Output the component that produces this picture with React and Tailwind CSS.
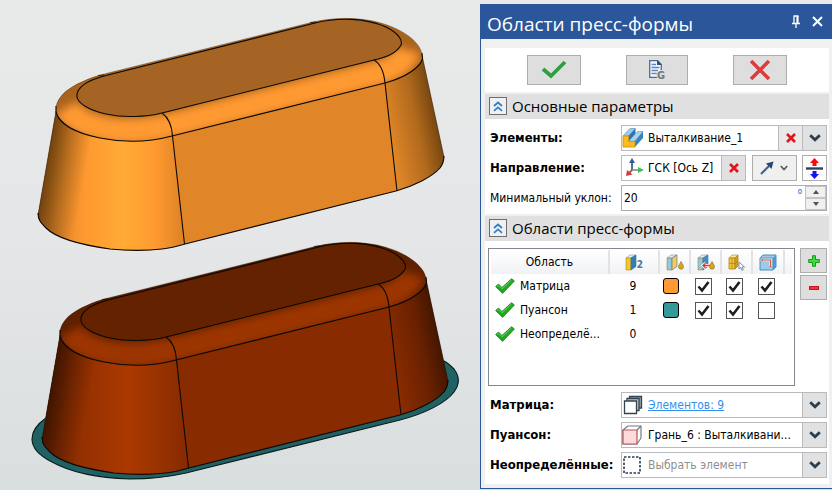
import React, { useState } from "react";

const UI_FONT = "font-['DejaVu_Sans_Condensed','DejaVu_Sans','Noto_Sans',sans-serif]";
const TITLE_FONT = "font-['Open_Sans','Noto_Sans',sans-serif]";

/* ---------- 3D scene ---------- */

const BODY = "M56 111 L38 215 C38 220 41 223 46 228 C56 238 82 245 110 249 C130 251 145 251 162 249 C170 248 178 246 185 244 L396 191 C414 186 432 177 440 168 C443 164 444 160 444 157 L422 55 Z";
const CAP = "M56 112 C55 104 59 97 66 91 C75 84 88 78 104 74 L313 22 C335 17 360 17 381 23 C398 28 411 36 417 44 C421 49 422 53 422.500 57 C421 66 407 77 385 83 L172 136 C150 142 125 143 100 138 C76 133 59 124 56 112 Z";
const TOP = "M77 97 C76 88 86 81 104 76 L315 23 C338 17 366 18 386 27 C398 33 403 40 401 45 C397 53 388 57 374 60 L162 113 C146 117 124 118 106 114 C88 110 78 103 77 97 Z";

const orange = { id: "upper", top: "#a56424", side: "#e08628", mid: "#ff9930", bright: "#ffab35", dark: "#553208", cap: "#a9631d", capGlow: "#ff9a30" };
const red = { id: "lower", top: "#642200", side: "#882b00", mid: "#983200", bright: "#ab3900", dark: "#2d0f00", cap: "#5e2000", capGlow: "#9c3400" };

function MoldHalf({ c, transform }) {
  return (
    <g transform={transform}>
      <defs>
        <linearGradient id={`${c.id}-left`} gradientUnits="userSpaceOnUse" x1="46" y1="0" x2="180" y2="0">
          <stop offset="0" stopColor={c.side} />
          <stop offset="0.3" stopColor={c.mid} />
          <stop offset="0.58" stopColor={c.bright} />
          <stop offset="0.82" stopColor={c.mid} />
          <stop offset="1" stopColor={c.side} />
        </linearGradient>
        <linearGradient id={`${c.id}-edge-l`} gradientUnits="userSpaceOnUse" x1="47" y1="164" x2="86" y2="171">
          <stop offset="0" stopColor={c.dark} stopOpacity="0.8" />
          <stop offset="0.5" stopColor={c.dark} stopOpacity="0.34" />
          <stop offset="1" stopColor={c.dark} stopOpacity="0" />
        </linearGradient>
        <linearGradient id={`${c.id}-edge-r`} gradientUnits="userSpaceOnUse" x1="434" y1="110" x2="386" y2="120">
          <stop offset="0" stopColor={c.dark} stopOpacity="0.75" />
          <stop offset="0.4" stopColor={c.dark} stopOpacity="0.34" />
          <stop offset="1" stopColor={c.dark} stopOpacity="0" />
        </linearGradient>
        <clipPath id={`${c.id}-cap`}><path d={CAP} /></clipPath>
        <filter id={`${c.id}-soft`} filterUnits="userSpaceOnUse" x="20" y="0" width="440" height="180">
          <feGaussianBlur stdDeviation="4" />
        </filter>
      </defs>
      <path d={BODY} fill={c.side} />
      <path d="M56 111 L38 215 C38 220 41 223 46 228 C56 238 82 245 110 249 C130 251 145 251 162 249 C170 248 178 246 185 244 L172 130 Z" fill={`url(#${c.id}-left)`} />
      <path d="M56 111 L38 215 C38 220 41 223 46 228 C56 238 82 245 110 249 L110 130 Z" fill={`url(#${c.id}-edge-l)`} />
      <path d="M385 83 L397 191 C414 186 432 177 440 168 C443 164 444 160 444 157 L422 55 Z" fill={`url(#${c.id}-edge-r)`} />
      <path d={CAP} fill={c.cap} />
      <g clipPath={`url(#${c.id}-cap)`}>
        <path d="M66 108 C76 124 103 131 128 131 C143 131 156 129 168 126 L380 73 C395 68 405 60 408 50" fill="none" stroke={c.capGlow} strokeWidth="25" filter={`url(#${c.id}-soft)`} />
      </g>
      <path d={TOP} fill={c.top} />
      <g fill="none" stroke="#0b0805" strokeWidth="1.1" strokeLinejoin="round">
        <path d={TOP} />
        <path d="M56 106 L56 112 C59 124 76 133 100 138 C125 143 150 142 172 136 L385 83 C407 77 420 67 422.500 59 L422 53" />
        <path d="M38 213 C38 220 41 223 46 228 C56 238 82 245 110 249 C130 251 145 251 162 249 C170 248 178 246 185 244 L396 191 C414 186 432 177 440 168 C443 164 444 160 444 156" />
        <path d="M162 113 C169 118 172 127 172.500 136 L184.500 244" />
        <path d="M374 60 C381 64 384 73 385 83 L397 191" />
        <path d="M56 111 L38 215 M422 55 L444 157" strokeOpacity="0.5" strokeWidth="0.8" />
        <path d="M56 107 C58 97 66 89 82 82 C88 79 96 76 104 74 L313 22 C335 17 360 17 381 23 C405 30 421 43 422 55" strokeOpacity="0.35" strokeWidth="0.7" />
        <path d="M98 75.500 L104 75 M310 22.500 L316 22" strokeOpacity="0.7" />
      </g>
    </g>
  );
}

function Scene() {
  return (
    <svg viewBox="0 0 480 490" className="block w-full" role="img" aria-label="3D">
      <path d="M46 418 C36 425 32 432 32 439 C32 448 40 456 52 462 C70 472 98 478 130 479 C150 479 168 477 186 473 L400 420 C424 414 446 403 454 392 C460 384 460 377 454 369 C451 366 448 363 444 361 L420 400 L200 440 L60 440 Z" fill="#206264" stroke="#0b1a1a" strokeWidth="1.1" />
      <MoldHalf c={red} transform="translate(4 224)" />
      <MoldHalf c={orange} />
    </svg>
  );
}

/* ---------- icons ---------- */

const Chevron = ({ small }) => small ? (
  <svg width="8" height="6" viewBox="0 0 8 6" fill="none" stroke="#555" strokeWidth="1.6"><path d="M.8 1 L4 4.500 L7.200 1" /></svg>
) : (
  <svg width="12" height="8" viewBox="0 0 12 8" fill="none" stroke="#2b3e4f" strokeWidth="2.800"><path d="M1.200 1.200 L6 5.800 L10.800 1.200" /></svg>
);

const RedCross = () => (
  <svg width="10" height="10" viewBox="0 0 10 10" stroke="#e3141c" strokeWidth="2.600"><path d="M1 1 L9 9 M9 1 L1 9" /></svg>
);

const ExtrudeIcon = () => (
  <svg width="22" height="22" viewBox="0 0 22 22" strokeLinejoin="round">
    <path d="M1 9 L8 1.500 H13.500 L6.500 9 Z" fill="#9dcbea" stroke="#4b86b3" strokeWidth=".6" />
    <path d="M6.500 9 L13.500 1.500 V7 L6.500 14.500 Z" fill="#2d74ae" />
    <path d="M6.500 14.500 L15.500 4.500 H21 L13 14 Z" fill="#a9d4ef" stroke="#4b86b3" strokeWidth=".5" />
    <path d="M13 14 L21 4.500 V11 L13 20 Z" fill="#3a82bc" />
    <path d="M1 9 H6.500 V14.500 H13 V20 H1 Z" fill="#fdbb22" stroke="#d39410" strokeWidth=".9" />
  </svg>
);

const AxesIcon = () => (
  <svg width="20" height="20" viewBox="0 0 20 20" fill="none">
    <path d="M7 4 V12" stroke="#3b5f95" strokeWidth="1.800" />
    <path d="M7 12 H14" stroke="#6d8a85" strokeWidth="1.500" />
    <path d="M7 12 L4 15" stroke="#a55" strokeWidth="1.800" />
    <path d="M7 0 L10 5 H4 Z" fill="#3358a0" />
    <path d="M19 12 L13 9 V15 Z" fill="#3fbf57" />
    <path d="M1 18 L2 12 L7.500 16.500 Z" fill="#d33a3a" />
  </svg>
);

const TableCheck = () => (
  <svg width="20" height="16" viewBox="0 0 20 16"><path d="M.6 8.500 L3.500 6 L7 9.500 L16.500 .7 L19.400 3 L7.600 15.400 Z" fill="#22a81f" stroke="#158016" strokeWidth=".8" strokeLinejoin="round" /><path d="M2 8.300 L3.500 7.200 L7 10.800 L16.500 2" fill="none" stroke="#62d457" strokeWidth="1" /></svg>
);

const Book = ({ front = "#f6c630", side = "#2f7fb8" }) => (
  <g strokeLinejoin="round" strokeWidth=".6">
    <path d="M1 4 L5 1 H11 L6 4 Z" fill="#e4eef3" stroke="#7796a5" />
    <path d="M1 4 H6 V16 H1 Z" fill={front} stroke="#a98725" />
    <path d="M6 4 L11 1 V12.500 L6 16 Z" fill={side} stroke="#35729c" />
  </g>
);
const Drop = () => <path d="M15 7.500 C16 9.800 17.500 11 17.500 12.700 A2.500 2.500 0 0 1 12.500 12.700 C12.500 11 14 9.800 15 7.500 Z" fill="#d9a514" stroke="#8e7b36" strokeWidth=".7" />;

const CountIcon = () => (
  <span className="flex items-end justify-center">
    <svg width="12" height="17" viewBox="0 0 12 17"><Book /></svg>
    <span className="text-[10px] font-bold leading-3 text-[#4f74a0]">2</span>
  </span>
);
const ColorIcon = () => <svg width="18" height="17" viewBox="0 0 18 17"><Book front="#8fc8e6" side="#f5c860" /><Drop /></svg>;
const ColorArrowIcon = () => <svg width="18" height="17" viewBox="0 0 18 17"><Book front="#8fc8e6" side="#3f8fc6" /><path d="M13 11.500 H6 M8.500 9 L6 11.500 L8.500 14" fill="none" stroke="#fff" strokeWidth="3" /><path d="M13 11.500 H6 M8.500 9.300 L6 11.500 L8.500 13.700" fill="none" stroke="#e23b32" strokeWidth="1.400" /><Drop /></svg>;
const PickFacesIcon = () => (
  <svg width="18" height="17" viewBox="0 0 18 17">
    <path d="M1 4 L4 1 H10 L7 4 Z" fill="#ffe795" stroke="#a98725" strokeWidth=".6" />
    <path d="M1 4 H7 V15 H1 Z" fill="#f8c52f" stroke="#a98725" strokeWidth=".8" />
    <path d="M7 4 L10 1 V12 L7 15 Z" fill="#d89c16" stroke="#a98725" strokeWidth=".8" />
    <path d="M1 9.500 H7 L10 6.500 M4 4 V15" stroke="#a07f22" strokeWidth=".7" fill="none" />
    <path d="M11 8 V15 L12.800 13.400 L14 16.400 L15.200 15.800 L14 13 H16.500 Z" fill="#fff" stroke="#6f83a6" strokeWidth=".9" />
  </svg>
);
const BoxPathIcon = () => (
  <svg width="18" height="17" viewBox="0 0 18 17">
    <path d="M1 4 L4 1 H17 V13 L14 16 H1 Z" fill="#9ccbe8" stroke="#3a86b8" strokeWidth=".9" />
    <path d="M14 16 V4 L17 1 V13 Z" fill="#4d9bcd" /><path d="M1 4 H14 V16" fill="none" stroke="#4c8fb8" strokeWidth=".7" />
    <path d="M3 6 H11.500 V13 M3 4.500 V7.500 M10 13 H13" fill="none" stroke="#e7f2f8" strokeWidth="2.600" />
    <path d="M3 6 H11.500 V13 M3 4.500 V7.500 M10 13 H13" fill="none" stroke="#dc5149" strokeWidth="1.200" />
  </svg>
);

const StackIcon = () => (
  <svg width="20" height="20" viewBox="0 0 20 20" stroke="#344150" strokeWidth="1.300">
    <path d="M6.500 1.500 H18.500 V13 H6.500 Z" fill="#9aa3aa" /><path d="M4 3.500 H16 V15.500 H4 Z" fill="#c6cbd0" /><path d="M1.500 6 H13.500 V18.500 H1.500 Z" fill="#fff" />
  </svg>
);
const FaceIcon = () => (
  <svg width="20" height="20" viewBox="0 0 20 20" strokeLinejoin="round">
    <path d="M1 5 L6 1 H19 V13 L15 19 H1 Z" fill="#fff" stroke="#747b83" strokeWidth="1.200" />
    <path d="M15 5 L19 1" stroke="#747b83" strokeWidth="1.200" />
    <path d="M1 5 H15 V19 H1 Z" fill="#ffdada" stroke="#b95555" strokeWidth="1.200" />
  </svg>
);
const DashedIcon = () => (
  <svg width="20" height="20" viewBox="0 0 20 20"><rect x="2" y="2" width="16" height="16" fill="none" stroke="#2c3e52" strokeWidth="1.600" strokeDasharray="2.500 1.500" /></svg>
);

/* ---------- panel parts ---------- */

const grayBtn = "flex items-center justify-center border border-[#adadad] bg-[#dedede]";
const fieldBox = "flex border border-[#b8babd] bg-white";

function SectionTitle({ children }) {
  return (
    <h2 className={`flex h-[25px] items-center gap-[5px] bg-[#e0e0e0] pb-px pl-1 text-[15px] text-black ${TITLE_FONT}`}>
      <button aria-label="Свернуть" className="flex size-[18px] items-center justify-center border border-[#6d6d6d] bg-[#f0f0f0]">
        <svg width="10" height="11" viewBox="0 0 10 11" fill="none" stroke="#2a7fcb" strokeWidth="1.700"><path d="M1 5 L5 1.500 L9 5 M1 9.800 L5 6.300 L9 9.800" /></svg>
      </button>
      {children}
    </h2>
  );
}

const rowGrid = "grid grid-cols-[minmax(0,1fr)_206px] items-center";

function FieldRow({ id, label, bold = true, children }) {
  return (
    <div className={rowGrid}>
      <label htmlFor={id} className={`whitespace-nowrap ${bold ? "text-[13px] font-bold" : ""}`}>{label}</label>
      {children}
    </div>
  );
}

function Picker({ id, value, muted, icon }) {
  return (
    <div className="grid h-[26px] grid-cols-[26px_minmax(0,1fr)_24px] items-center border border-[#b8babd] bg-white">
      <span className="pointer-events-none z-10 col-start-1 row-start-1">{icon}</span>
      <span className="pointer-events-none z-10 col-start-3 row-start-1 flex h-full items-center justify-center border-l border-[#b8babd] bg-[#e1e1e1]"><Chevron /></span>
      <select id={id} className={`col-span-3 col-start-1 row-start-1 h-full w-full appearance-none bg-transparent pr-6 pl-[26px] ${muted ? "text-[#8f8f8f]" : "text-black"}`}>
        <option>{value}</option>
      </select>
    </div>
  );
}

function Tick({ label, initial }) {
  const [on, setOn] = useState(initial);
  return (
    <label className="mx-auto grid size-[17px]">
      <input type="checkbox" aria-label={label} checked={on} onChange={() => setOn(!on)} className="col-start-1 row-start-1 size-[17px] appearance-none border border-[#555] bg-white" />
      {on && <svg className="pointer-events-none col-start-1 row-start-1" width="17" height="17" viewBox="0 0 17 17" fill="none" stroke="#1d1d1d" strokeWidth="2.600"><path d="M3.500 8.500 L7 12.500 L13.500 4" /></svg>}
    </label>
  );
}

const regions = [
  { name: "Матрица", count: 9, swatch: "bg-[#ff9933]", ticks: [true, true, true] },
  { name: "Пуансон", count: 1, swatch: "bg-[#339999]", ticks: [true, true, false] },
  { name: "Неопределё...", count: 0, swatch: null, ticks: [] },
];

function RegionTable() {
  const th = "border-r-2 border-[#e3e3e3] p-0 font-normal";
  return (
    <div className="h-[138px] min-w-0 flex-1 border border-[#828790] bg-white px-[2px] pt-px">
      <table className="w-full table-fixed border-collapse">
        <colgroup><col /><col className="w-[50px]" /><col className="w-[31px]" /><col className="w-[31px]" /><col className="w-[31px]" /><col className="w-[32px]" /><col className="w-[8px]" /></colgroup>
        <thead>
          <tr className="h-6 bg-gradient-to-b from-white to-[#f1f2f4]">
            <th className={th}>Область</th>
            {[CountIcon, ColorIcon, ColorArrowIcon, PickFacesIcon, BoxPathIcon].map((Icon, i) => (
              <th key={i} className={th}><span className="flex justify-center"><Icon /></span></th>
            ))}
            <th className="p-0" />
          </tr>
        </thead>
        <tbody>
          {regions.map((r) => (
            <tr key={r.name} className="h-6">
              <td className="p-0"><span className="flex items-center gap-[5px] pl-1 whitespace-nowrap"><TableCheck />{r.name}</span></td>
              <td className="py-0 pr-[2px] pl-0 text-center">{r.count}</td>
              <td className="py-0 pr-2 pl-0">{r.swatch && <button aria-label={`Цвет: ${r.name}`} className={`mx-auto block size-4 rounded-[3px] border border-black ${r.swatch}`} />}</td>
              {r.ticks.map((t, i) => <td key={i} className="py-0 pr-1 pl-0"><Tick initial={t} label={`${r.name} ${i + 1}`} /></td>)}
            </tr>
          ))}
        </tbody>
      </table>
    </div>
  );
}

function Panel() {
  return (
    <aside className={`mt-1 flex w-[352px] shrink-0 flex-col self-start border-b border-l border-[#2b579a] bg-[#f0f0f0] text-[12px] leading-4 text-black ${UI_FONT}`}>
      <header className="flex h-[35px] items-center bg-[#2b579a] pr-[9px] pl-1.5 text-white">
        <h1 className={`flex-1 pt-1 text-[19px] whitespace-nowrap ${TITLE_FONT}`}>Области пресс-формы</h1>
        <button aria-label="Закрепить" className="mr-[11px]">
          <svg width="10" height="14" viewBox="0 0 10 14" fill="none" stroke="#fff" strokeWidth="1.300"><path d="M2.500 1 H7.500 M3 1 V8 M1 8.500 H9 M5 9 V13" /><path d="M6.500 1 V8" strokeWidth="2.200" /></svg>
        </button>
        <button aria-label="Закрыть">
          <svg width="11" height="11" viewBox="0 0 11 11" stroke="#fff" strokeWidth="2"><path d="M1 1 L10 10 M10 1 L1 10" /></svg>
        </button>
      </header>

      <div className="flex flex-col gap-[2px] pt-[9px] pr-[3px] pb-[4px] pl-1">
        <div className="flex h-11 items-center justify-between bg-white px-[42px]">
          <button aria-label="Применить" className={`${grayBtn} h-[30px] w-[54px]`}>
            <svg width="26" height="20" viewBox="0 0 26 20" fill="none" stroke="#2f9f40" strokeWidth="3.800"><path d="M2 9 L10 16 L24 2" /></svg>
          </button>
          <button aria-label="Отчёт" className={`${grayBtn} h-[30px] w-[62px]`}>
            <svg width="22" height="26" viewBox="-2 -2 22 26">
              <path d="M1.700 1.700 H9.500 L13.300 5.500 V18.300 H1.700 Z" fill="#f4f8fc" stroke="#4a6b9c" strokeWidth="1.300" />
              <path d="M9 1 L14 6 H9 Z" fill="#2b4f8a" />
              <path d="M3.500 5.500 H8 M3.500 8.500 H11.500 M3.500 11.500 H10 M3.500 14.500 H9" stroke="#5e88bd" strokeWidth="1.300" />
              <text x="9" y="20" fontSize="11" fontWeight="bold" fill="#777" stroke="#dedede" strokeWidth="2" paintOrder="stroke">G</text>
            </svg>
          </button>
          <button aria-label="Отменить" className={`${grayBtn} h-[30px] w-[54px]`}>
            <svg width="20" height="20" viewBox="0 0 20 20" stroke="#dc3c3c" strokeWidth="3.600"><path d="M1 1 L19 19 M19 1 L1 19" /></svg>
          </button>
        </div>

        <section>
          <SectionTitle>Основные параметры</SectionTitle>
          <div className="flex flex-col gap-1 bg-white pt-1.5 pr-[2px] pb-[3px] pl-[5px]">
            <FieldRow id="elements" label="Элементы:">
              <div className={`${fieldBox} h-[26px]`}>
                <span className="flex w-[26px] shrink-0 items-center"><ExtrudeIcon /></span>
                <input id="elements" readOnly value="Выталкивание_1" className="min-w-0 flex-1 bg-transparent" />
                <button aria-label="Удалить элемент" className="flex w-6 items-center justify-center border-l border-[#b8babd] bg-[#e9e9e9]"><RedCross /></button>
                <button aria-label="Список элементов" className="flex w-6 items-center justify-center border-l border-[#b8babd] bg-[#e1e1e1]"><Chevron /></button>
              </div>
            </FieldRow>
            <FieldRow id="direction" label="Направление:">
              <div className="flex h-[26px] justify-between">
                <div className={`${fieldBox} w-[125px]`}>
                  <span className="flex w-[26px] shrink-0 items-center pl-[3px]"><AxesIcon /></span>
                  <input id="direction" readOnly value="ГСК [Ось Z]" className="min-w-0 flex-1 bg-transparent" />
                  <button aria-label="Удалить направление" className="flex w-6 items-center justify-center border-l border-[#b8babd] bg-[#e1e1e1]"><RedCross /></button>
                </div>
                <button aria-label="Выбор направления" className="flex w-[45px] items-center justify-center gap-1.5 border border-[#adadad] bg-[#f0f0f0]">
                  <svg width="14" height="14" viewBox="0 0 14 14"><path d="M1 13 L9 5" stroke="#3c638f" strokeWidth="2" /><path d="M13.500 .5 L11.500 8 L6 2.500 Z" fill="#27466f" /></svg>
                  <Chevron small />
                </button>
                <button aria-label="Обратить направление" className="flex w-[25px] items-center justify-center border border-[#adadad] bg-[#fdfdfd]">
                  <svg width="17" height="21" viewBox="0 0 17 21"><path d="M8.500 0 L13 5 H10.500 V8 H6.500 V5 H4 Z" fill="#f00b12" /><path d="M0 10.500 H17" stroke="#2b4360" strokeWidth="2.400" /><path d="M8.500 21 L13 16 H10.500 V13 H6.500 V16 H4 Z" fill="#1411f5" /></svg>
                </button>
              </div>
            </FieldRow>
            <FieldRow id="draft" label="Минимальный уклон:" bold={false}>
              <div className="flex h-[26px] border border-[#abadb3] bg-white">
                <input id="draft" defaultValue="20" className="min-w-0 flex-1 bg-transparent pl-[2px]" />
                <span className="pt-px pr-[2px] text-[14px] text-[#2590e0]">°</span>
                <div className="flex w-[21px] flex-col">
                  <button aria-label="Больше" className="flex flex-1 items-center justify-center border border-[#c4c4c4] bg-[#f0f0f0]"><svg width="6" height="4" viewBox="0 0 6 4"><path d="M0 4 L3 0 L6 4 Z" fill="#505050" /></svg></button>
                  <button aria-label="Меньше" className="flex flex-1 items-center justify-center border border-[#c4c4c4] bg-[#f0f0f0]"><svg width="6" height="4" viewBox="0 0 6 4"><path d="M0 0 L3 4 L6 0 Z" fill="#505050" /></svg></button>
                </div>
              </div>
            </FieldRow>
          </div>
        </section>

        <section>
          <SectionTitle>Области пресс-формы</SectionTitle>
          <div className="flex flex-col gap-1 bg-white pt-[7px] pr-[2px] pb-1.5 pl-[5px]">
            <div className="-ml-[2px] flex gap-[5px] pb-[2px]">
              <RegionTable />
              <div className="flex flex-col gap-[2px]">
                <button aria-label="Добавить область" className={`${grayBtn} h-[25px] w-[27px]`}><svg width="12" height="12" viewBox="0 0 12 12"><path d="M4.500 .7 H7.500 V4.500 H11.300 V7.500 H7.500 V11.300 H4.500 V7.500 H.7 V4.500 H4.500 Z" fill="#3fdb3f" stroke="#189a1c" strokeWidth="1" /></svg></button>
                <button aria-label="Удалить область" className={`${grayBtn} h-[25px] w-[27px]`}><svg width="10" height="4" viewBox="0 0 10 4"><rect x=".5" y=".5" width="9" height="3" fill="#f2333a" stroke="#c9141c" /></svg></button>
              </div>
            </div>
            <FieldRow id="matrix" label="Матрица:">
              <div className={`${fieldBox} h-[26px]`}>
                <span className="flex w-[26px] shrink-0 items-center pl-px"><StackIcon /></span>
                <a href="#matrix" className="flex flex-1 items-center text-[#3390f0] underline">Элементов: 9</a>
                <button id="matrix" aria-label="Список элементов матрицы" className="flex w-6 items-center justify-center border-l border-[#b8babd] bg-[#e1e1e1]"><Chevron /></button>
              </div>
            </FieldRow>
            <FieldRow id="punch" label="Пуансон:">
              <Picker id="punch" value="Грань_6 : Выталкивани..." icon={<FaceIcon />} />
            </FieldRow>
            <FieldRow id="undefined-area" label="Неопределённые:">
              <Picker id="undefined-area" value="Выбрать элемент" muted icon={<DashedIcon />} />
            </FieldRow>
          </div>
        </section>
      </div>
    </aside>
  );
}

export default function App() {
  return (
    <main className="flex min-h-screen items-start bg-gradient-to-b from-[#e8eae9] via-[#e5e6e8] to-[#d9dede]">
      <div className="min-w-0 flex-1"><Scene /></div>
      <Panel />
    </main>
  );
}
